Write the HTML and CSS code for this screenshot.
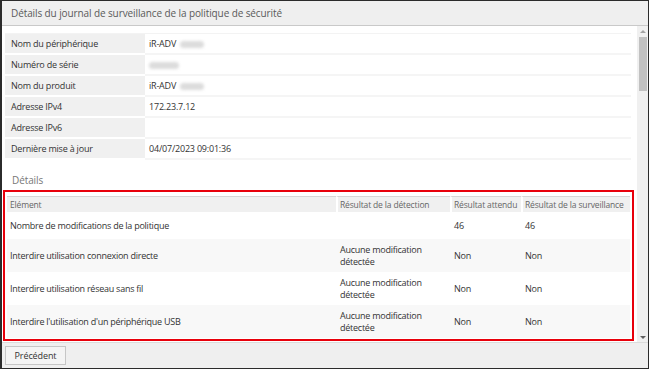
FILE: index.html
```html
<!DOCTYPE html>
<html lang="fr">
<head>
    <meta charset="UTF-8">
    <title>Détails du journal de surveillance de la politique de sécurité</title>
    <link rel="stylesheet" href="styles.css">
</head>
<body>

<div class="window">
    <div class="title-bar">Détails du journal de surveillance de la politique de sécurité</div>

    <div class="window-body">
        <div class="content">
            <table class="info-table">
                <tr><th>Nom du périphérique</th><td>iR-ADV <span class="blur"></span></td></tr>
                <tr><th>Numéro de série</th><td><span class="blur wide"></span></td></tr>
                <tr><th>Nom du produit</th><td>iR-ADV <span class="blur"></span></td></tr>
                <tr><th>Adresse IPv4</th><td>172.23.7.12</td></tr>
                <tr><th>Adresse IPv6</th><td></td></tr>
                <tr><th>Dernière mise à jour</th><td>04/07/2023 09:01:36</td></tr>
            </table>

            <div class="section-title">Détails</div>

            <div class="highlight">
                <table class="detail-table">
                    <colgroup>
                        <col class="col-item">
                        <col class="col-detect">
                        <col class="col-expect">
                        <col>
                    </colgroup>
                    <thead>
                        <tr>
                            <th>Elément</th>
                            <th>Résultat de la détection</th>
                            <th>Résultat attendu</th>
                            <th>Résultat de la surveillance</th>
                        </tr>
                    </thead>
                    <tbody>
                        <tr class="short">
                            <td>Nombre de modifications de la politique</td>
                            <td></td>
                            <td>46</td>
                            <td>46</td>
                        </tr>
                        <tr>
                            <td>Interdire utilisation connexion directe</td>
                            <td>Aucune modification<br>détectée</td>
                            <td>Non</td>
                            <td>Non</td>
                        </tr>
                        <tr>
                            <td>Interdire utilisation réseau sans fil</td>
                            <td>Aucune modification<br>détectée</td>
                            <td>Non</td>
                            <td>Non</td>
                        </tr>
                        <tr>
                            <td>Interdire l'utilisation d'un périphérique USB</td>
                            <td>Aucune modification<br>détectée</td>
                            <td>Non</td>
                            <td>Non</td>
                        </tr>
                    </tbody>
                </table>
            </div>
        </div>

        <div class="scrollbar">
            <div class="arrow up"></div>
            <div class="track"><div class="thumb"></div></div>
            <div class="arrow down"></div>
        </div>
    </div>

    <div class="footer">
        <button class="btn">Précédent</button>
    </div>
</div>

</body>
</html>
```

FILE: styles.css
```css
body {
    margin: 0;
    padding: 0;
    background: #ffffff;
    font-family: 'Open Sans', 'Noto Sans', sans-serif;
}

.window {
    width: 649px;
    height: 369px;
    box-sizing: border-box;
    border: 1px solid #2b2b2b;
    border-left-width: 2px;
    display: flex;
    flex-direction: column;
    background: #ffffff;
}

.title-bar {
    flex-shrink: 0;
    height: 24px;
    line-height: 24px;
    background: #efefef;
    border-bottom: 1px solid #c9c9c9;
    padding-left: 9px;
    font-size: 10px;
    color: #5a5a5a;
    letter-spacing: -0.1px;
}

.window-body {
    flex: 1 1 0;
    display: flex;
    min-height: 0;
}

.content {
    flex: 1;
    padding: 7px 0 0 3px;
    overflow: hidden;
}

.info-table {
    width: 626px;
    border-collapse: separate;
    border-spacing: 0;
    font-size: 9px;
    letter-spacing: -0.2px;
    color: #333;
    border-top: 1px solid #f3f3f3;
}

.info-table th,
.info-table td {
    height: 19px;
    padding: 0 6px;
    text-align: left;
    font-weight: normal;
    white-space: nowrap;
}

.info-table th {
    width: 128px;
    background: #f0f0f0;
    border-bottom: 2px solid #ffffff;
}

.info-table td {
    padding-left: 4px;
    border-bottom: 2px solid #f5f5f5;
}

.blur {
    display: inline-block;
    width: 24px;
    height: 7px;
    margin-left: 2px;
    vertical-align: middle;
    background: #dcdcdc;
    border-radius: 4px;
    filter: blur(1.5px);
}

.blur.wide {
    width: 30px;
    margin-left: 0;
}

.section-title {
    margin: 13px 0 0 7px;
    height: 17px;
    font-size: 10px;
    letter-spacing: -0.1px;
    color: #777;
}

.highlight {
    width: 631px;
    margin-left: -2px;
    box-sizing: border-box;
    border: 2px solid #e8000b;
    padding: 4px 2px 1px 2px;
}

.detail-table {
    width: 100%;
    border-collapse: separate;
    border-spacing: 0;
    font-size: 9px;
    letter-spacing: -0.25px;
    color: #333;
    table-layout: fixed;
}

.col-item { width: 329px; }
.col-detect { width: 114px; }
.col-expect { width: 71px; }

.detail-table th {
    height: 15px;
    padding: 0 2px 0 2px;
    text-align: left;
    font-weight: normal;
    font-size: 8.5px;
    letter-spacing: -0.15px;
    color: #666;
    background: #f0f0f0;
    border-top: 1px solid #d6d6d6;
    border-left: 2px solid #ffffff;
    white-space: nowrap;
    overflow: hidden;
}

.detail-table th:first-child {
    border-left: none;
    padding-left: 3px;
}

.detail-table td {
    height: 33px;
    padding: 0 2px 0 4px;
    line-height: 12px;
    vertical-align: middle;
}

.detail-table td:first-child {
    padding-left: 3px;
}

.detail-table tr.short td {
    height: 27px;
}

.detail-table tbody tr:nth-child(even) td {
    background: #f8f8f8;
}

.scrollbar {
    width: 11px;
    background: #f0f0f0;
    display: flex;
    flex-direction: column;
    align-items: center;
}

.arrow {
    height: 11px;
    width: 11px;
    position: relative;
}

.arrow.up::after,
.arrow.down::after {
    content: "";
    position: absolute;
    left: 3px;
    border-left: 3px solid transparent;
    border-right: 3px solid transparent;
}

.arrow.up::after {
    top: 4px;
    border-bottom: 3px solid #a3a3a3;
}

.arrow.down::after {
    top: 5px;
    border-top: 3px solid #606060;
}

.track {
    flex: 1;
    width: 100%;
    display: flex;
    justify-content: center;
}

.thumb {
    width: 8px;
    height: 54px;
    background: #c1c1c1;
}

.footer {
    flex-shrink: 0;
    height: 26px;
    box-sizing: border-box;
    background: #efefef;
    border-top: 1px solid #dcdcdc;
    padding: 3px 3px;
}

.btn {
    display: block;
    height: 19px;
    width: 61px;
    padding: 0;
    background: #f4f4f4;
    border: 1px solid #c6c6c6;
    font-family: 'Open Sans', 'Noto Sans', sans-serif;
    font-size: 9px;
    letter-spacing: -0.1px;
    color: #333;
}
```
